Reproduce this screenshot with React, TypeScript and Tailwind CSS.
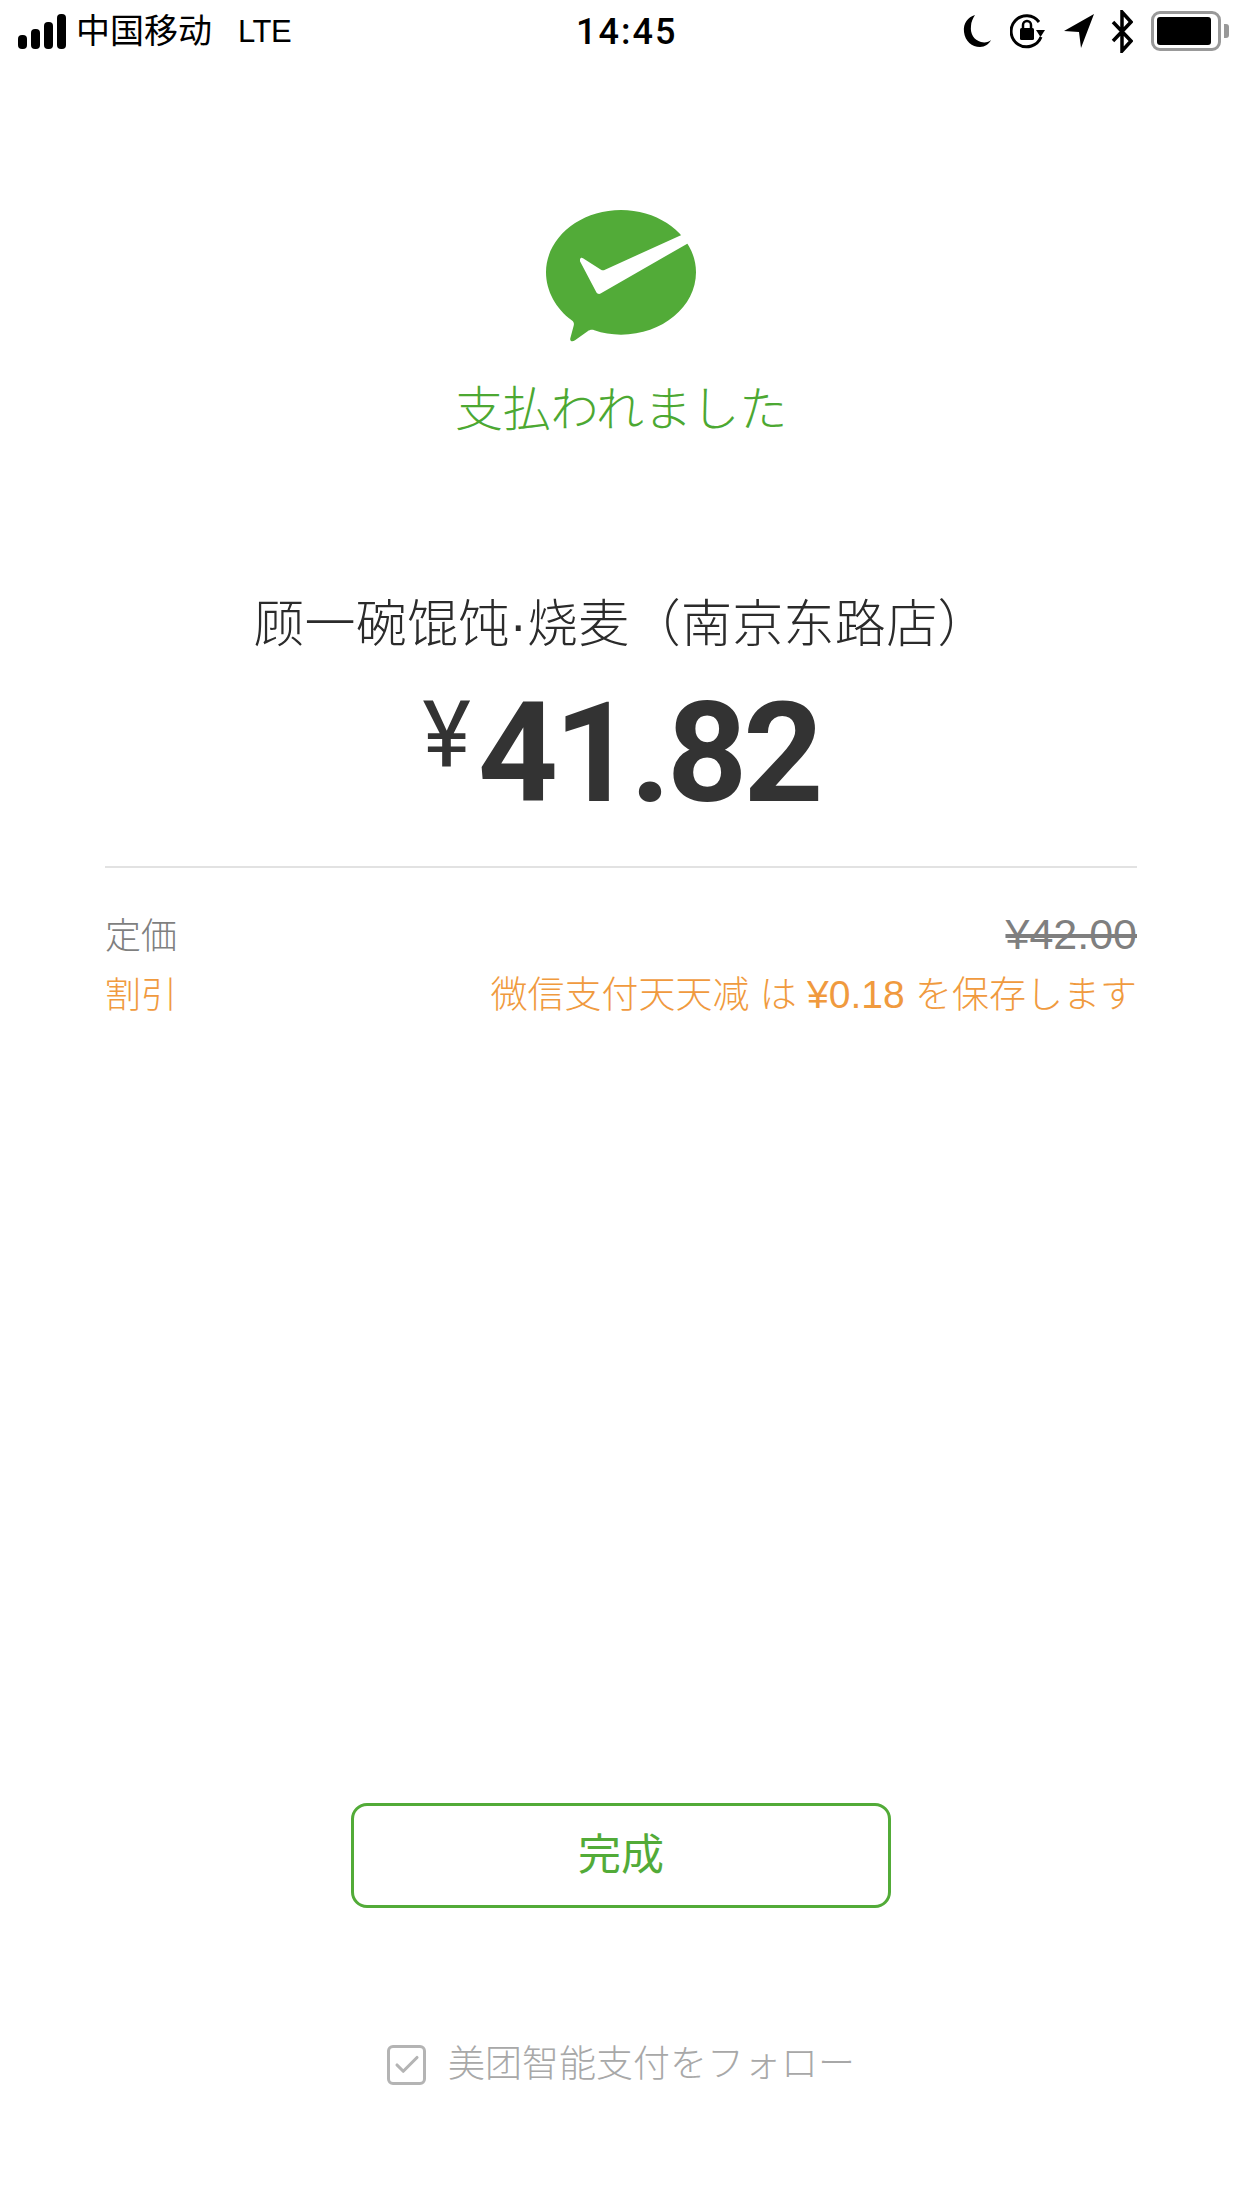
import { Check } from 'lucide-react';

function SignalBars() {
  return (
    <div className="flex items-end gap-[4px] h-[35px]">
      <div className="w-[9px] h-[14px] rounded-[4px] bg-black" />
      <div className="w-[9px] h-[20px] rounded-[4px] bg-black" />
      <div className="w-[9px] h-[27px] rounded-[4px] bg-black" />
      <div className="w-[9px] h-[35px] rounded-[4px] bg-black" />
    </div>
  );
}

function StatusIcons() {
  return (
    <div className="flex items-center">
      {/* moon */}
      <svg width="28" height="34" viewBox="0 0 28 34" className="mr-[19px]">
        <path d="M12 1C5 3 0 9 1 18c1 9 8 15 16 15 5 0 9-3 11-7-2 2-6 3-10 2C11 26 7 20 8 12c0-4 2-8 4-11z" fill="#000" />
      </svg>
      {/* rotation lock */}
      <svg width="36" height="36" viewBox="0 0 36 36" className="mr-[18px]">
        <path d="M29 9A15.5 15.5 0 1 0 31 24" fill="none" stroke="#000" strokeWidth="3" />
        <path d="M26 17h9l-4.500 7z" fill="#000" />
        <rect x="10" y="15" width="14" height="12" rx="1.500" fill="#000" />
        <path d="M13 15v-3a4 4 0 0 1 8 0v3" fill="none" stroke="#000" strokeWidth="2.500" />
      </svg>
      {/* location arrow */}
      <svg width="30" height="34" viewBox="0 0 30 34" className="mr-[17px]">
        <path d="M30 0L0 17l15 1 2 16z" fill="#000" />
      </svg>
      {/* bluetooth */}
      <svg width="22" height="43" viewBox="0 0 22 43" className="mr-[18px]">
        <path d="M2 12l18 19-9 10V2l9 10L2 31" fill="none" stroke="#000" strokeWidth="3.500" />
      </svg>
      {/* battery */}
      <div className="flex items-center">
        <div className="w-[70px] h-[40px] rounded-[9px] border-[3px] border-[#999999] p-[3px]">
          <div className="w-[54px] h-full rounded-[3px] bg-black" />
        </div>
        <div className="w-[5px] h-[14px] ml-[3px] rounded-r-[3px] bg-[#999999]" />
      </div>
    </div>
  );
}

function PayLogo() {
  return (
    <svg width="150" height="132" viewBox="348 60 450 396">
      <path
        d="M573 60c124 0 225 84 225 187s-101 187-225 187c-28 0-55-4-80-13-8-3-14-1-20 3l-38 27c-8 5-16 3-14-6l10-38c2-7 0-12-6-16-47-34-77-88-77-144C348 144 449 60 573 60z"
        fill="#52AB38"
      />
      <path
        d="M450 208c1-5 5-6 9-3l54 34c4 2 8 2 12 0l236-107 16 26-264 152c-5 3-11 2-14-3l-49-93z"
        fill="#fff"
      />
    </svg>
  );
}

export default function App() {
  return (
    <div className="w-[1242px] h-[2208px] bg-white flex flex-col font-['Liberation_Sans','Noto_Sans_CJK_JP',sans-serif]">
      {/* Status bar */}
      <div className="relative h-[62px] pl-[18px] pr-[13px] flex items-center justify-between text-black">
        <div className="flex items-center">
          <SignalBars />
          <span className="ml-[10px] text-[34px] leading-none">中国移动</span>
          <span className="ml-[26px] text-[31px] leading-none tracking-[-0.5px]">LTE</span>
        </div>
        <span className="absolute left-[576px] top-[14px] text-[36px] leading-[36px] font-medium tracking-[2px] font-['Roboto',sans-serif]">14:45</span>
        <StatusIcons />
      </div>

      {/* Result */}
      <div className="flex flex-col items-center mt-[148px]">
        <PayLogo />
        <p className="mt-[40px] text-[48px] leading-[56px] tracking-[-0.2px] font-light text-[#4CA832]">支払われました</p>
        <p className="mt-[157px] text-[51px] leading-[60px] tracking-[0.3px] font-light text-[#2b2b2b]">顾一碗馄饨·烧麦（南京东路店）</p>
        <div className="mt-[15px] flex items-start text-[#333333] font-['Roboto',sans-serif]">
          <span className="text-[92px] leading-[108px] mr-[7px] mt-[12px]">¥</span>
          <span className="text-[140px] leading-[166px] font-bold tracking-[-4px]">41.82</span>
        </div>
      </div>

      {/* Details */}
      <div className="mx-[105px] mt-[30px] pt-[45px] border-t-2 border-[#e2e2e2] flex flex-col gap-[16px] text-[36px] leading-[42px] font-light">
        <div className="flex items-baseline justify-between text-[#7f7f7f]">
          <span>定価</span>
          <span className="text-[43px] line-through">¥42.00</span>
        </div>
        <div className="flex items-baseline justify-between text-[#F09A3E]">
          <span>割引</span>
          <span className="text-[37px]">微信支付天天减 は <span className="text-[39px]">¥0.18</span> を保存します</span>
        </div>
      </div>

      {/* Actions */}
      <button className="self-center mt-[786px] w-[540px] h-[105px] rounded-[16px] border-[3px] border-[#52AB38] text-[43px] text-[#52AB38]">
        完成
      </button>
      <div className="self-center mt-[135px] flex items-center gap-[22px] text-[37px] leading-[44px] font-light text-[#a8a8a8]">
        <div className="w-[39px] h-[40px] rounded-[6px] border-[3px] border-[#b4b4b4] flex items-center justify-center">
          <Check size={30} strokeWidth={2.5} color="#b4b4b4" />
        </div>
        <span>美团智能支付をフォロー</span>
      </div>
    </div>
  );
}
